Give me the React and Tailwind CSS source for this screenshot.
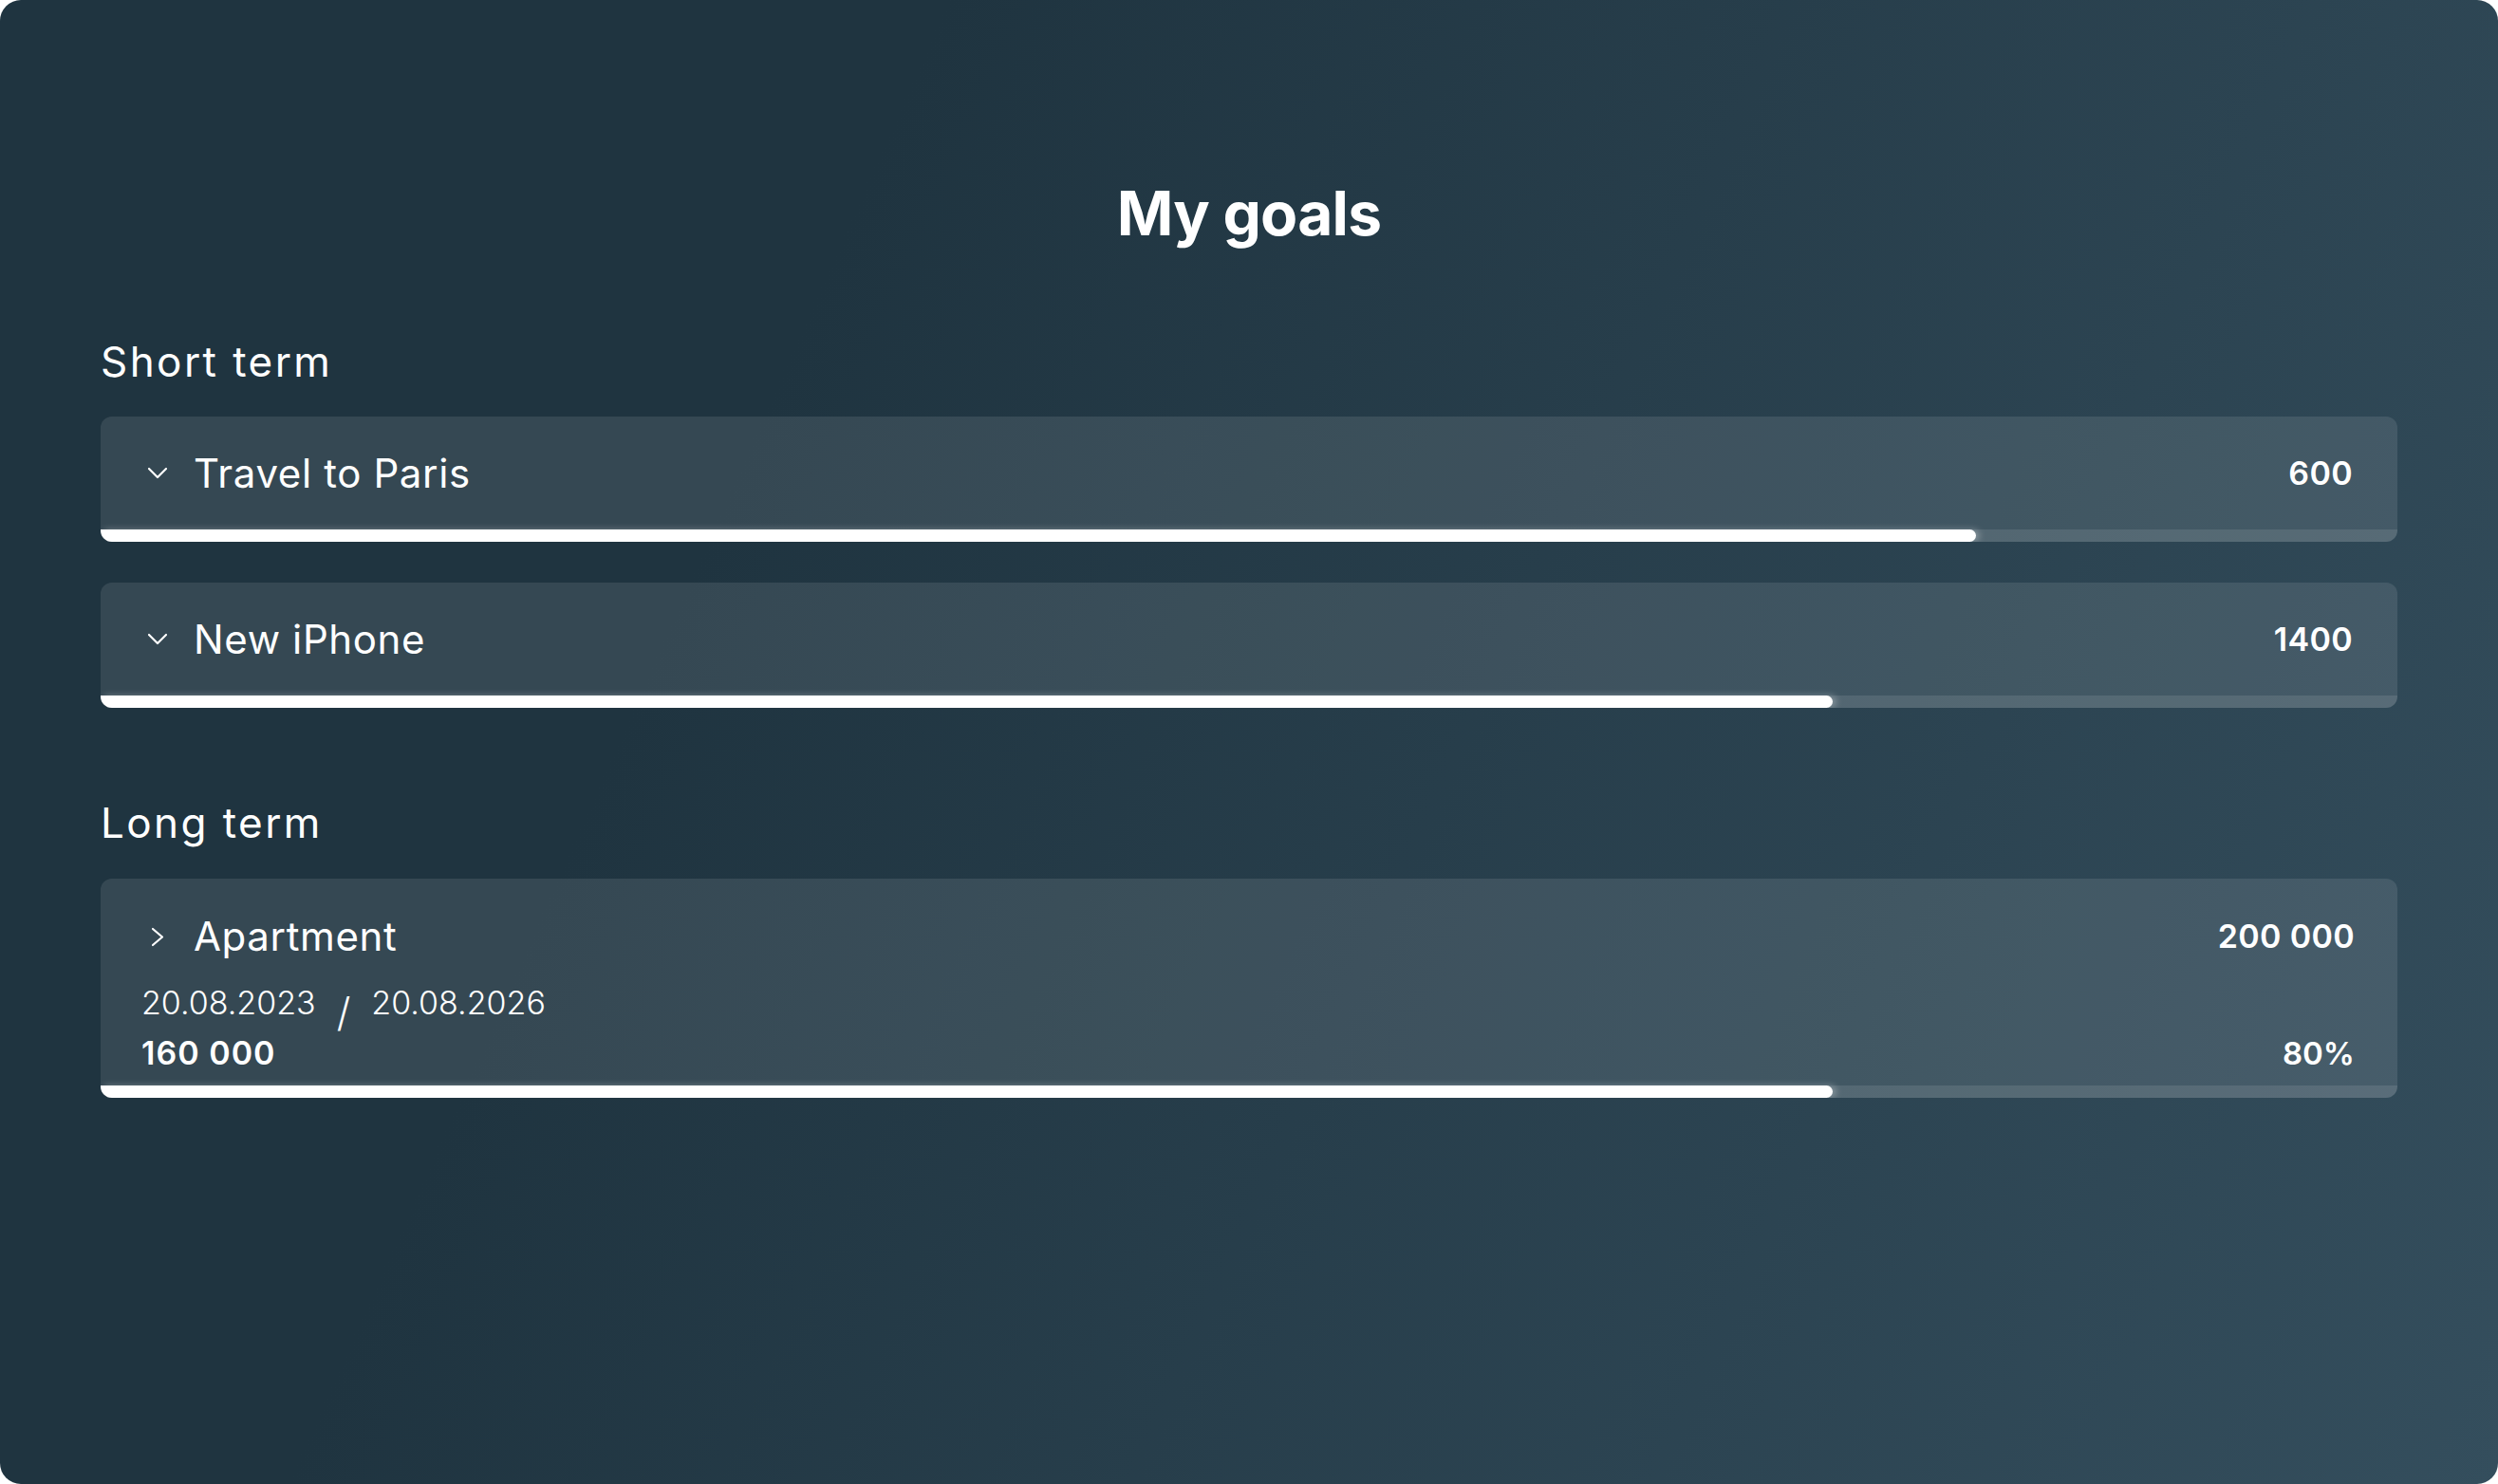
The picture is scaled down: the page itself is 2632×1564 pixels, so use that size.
const shortTerm = [
    {title: "Travel to Paris", amount: "600", progress: 81.65},
    {title: "New iPhone", amount: "1400", progress: 75.4},
];

const longTerm = [
    {
        title: "Apartment",
        amount: "200 000",
        start: "20.08.2023",
        end: "20.08.2026",
        saved: "160 000",
        percent: "80%",
        progress: 75.4,
    },
];

function ChevronDown() {
    return (
        <svg width="22" height="13" viewBox="0 0 22 13" fill="none" stroke="white" strokeWidth="2.2"
             strokeLinecap="round" strokeLinejoin="round">
            <path d="M2 2 L11 11 L20 2"/>
        </svg>
    );
}

function ChevronRight() {
    return (
        <svg width="14" height="21" viewBox="0 0 14 21" fill="none" stroke="white" strokeWidth="2.2"
             strokeLinecap="round" strokeLinejoin="round">
            <path d="M2 2 L12 10.5 L2 19"/>
        </svg>
    );
}

function ProgressBar({progress}) {
    return (
        <div className="h-[13px] w-full bg-white/10">
            <div
                className="h-full rounded-r-full bg-white shadow-[4px_0_7px_rgba(255,255,255,0.3)]"
                style={{width: `${progress}%`}}
            />
        </div>
    );
}

function ShortGoal({goal}) {
    return (
        <div className="overflow-hidden rounded-[12px] bg-white/10">
            <div className="flex h-[119px] items-center pl-[40px] pr-[47px]">
                <div className="flex w-10 justify-center">
                    <ChevronDown/>
                </div>
                <span className="ml-[18px] text-[42px] leading-none tracking-[0.015em] text-white">{goal.title}</span>
                <span className="ml-auto text-[34px] font-semibold leading-none tracking-[0.01em] text-white">{goal.amount}</span>
            </div>
            <ProgressBar progress={goal.progress}/>
        </div>
    );
}

function LongGoal({goal}) {
    return (
        <div className="overflow-hidden rounded-[12px] bg-white/10">
            <div className="pt-[40px] pb-[17px]">
                <div className="flex items-center pl-[40px] pr-[45px]">
                    <div className="flex w-10 justify-center">
                        <ChevronRight/>
                    </div>
                    <span className="ml-[18px] text-[42px] leading-none tracking-[0.015em] text-white">{goal.title}</span>
                    <span className="ml-auto text-[34px] font-semibold leading-none tracking-[0.01em] text-white">{goal.amount}</span>
                </div>
                <div className="mt-[32px] flex h-[34px] items-start pl-[43px] text-white">
                    <span className="text-[34px] font-light leading-none">{goal.start}</span>
                    <span className="mx-[22px] mt-[6px] text-[42px] font-light leading-none">/</span>
                    <span className="text-[34px] font-light leading-none">{goal.end}</span>
                </div>
                <div className="mt-[19px] flex items-center pl-[43px] pr-[45px] text-white">
                    <span className="text-[34px] font-semibold leading-none tracking-[0.03em]">{goal.saved}</span>
                    <span className="ml-auto text-[33px] font-semibold leading-none">{goal.percent}</span>
                </div>
            </div>
            <ProgressBar progress={goal.progress}/>
        </div>
    );
}

export default function App() {
    return (
        <div className="min-h-screen bg-white font-['Inter','Noto_Sans',sans-serif]">
            <div
                className="h-[1564px] rounded-[22px] bg-linear-[114deg] from-[#1f3440] from-30% to-[#344e5d] px-[106px] pt-[193px]">
                <h1 className="text-center text-[64px] font-bold leading-none tracking-[-0.012em] text-white">My goals</h1>

                <section className="mt-[102px]">
                    <h2 className="text-[44px] font-normal leading-none tracking-[0.055em] text-white">Short term</h2>
                    <div className="mt-[36px] flex flex-col gap-[43px]">
                        {shortTerm.map(goal => (
                            <ShortGoal key={goal.title} goal={goal}/>
                        ))}
                    </div>
                </section>

                <section className="mt-[99px]">
                    <h2 className="text-[44px] font-normal leading-none tracking-[0.055em] text-white">Long term</h2>
                    <div className="mt-[37px] flex flex-col gap-[43px]">
                        {longTerm.map(goal => (
                            <LongGoal key={goal.title} goal={goal}/>
                        ))}
                    </div>
                </section>
            </div>
        </div>
    );
}
